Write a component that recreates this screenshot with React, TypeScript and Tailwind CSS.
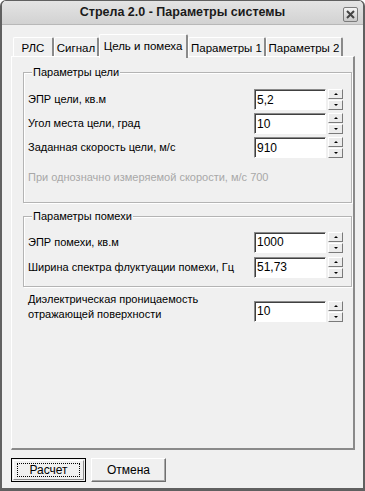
import React from 'react';

const font = { fontFamily: '"Liberation Sans", Arial, sans-serif' };

type Tab = { name: string; w: string; active?: boolean };

const tabs: Tab[] = [
    { name: 'РЛС', w: 'w-[41px]' },
    { name: 'Сигнал', w: 'w-[45px]' },
    { name: 'Цель и помеха', w: 'w-[89px]', active: true },
    { name: 'Параметры 1', w: 'w-[78px]' },
    { name: 'Параметры 2', w: 'w-[77px]' },
];

function Spinner() {
    return (
        <div className="ml-[2px] flex flex-col gap-[1px]">
            <div className="flex h-[10px] w-[15px] items-center justify-center border border-t-white border-l-white border-r-[#7a7a7a] border-b-[#7a7a7a] bg-[#ececec]">
                <div className="h-0 w-0 border-x-[2px] border-b-[2px] border-x-transparent border-b-black" />
            </div>
            <div className="flex h-[10px] w-[15px] items-center justify-center border border-t-white border-l-white border-r-[#7a7a7a] border-b-[#7a7a7a] bg-[#ececec]">
                <div className="h-0 w-0 border-x-[2px] border-t-[2px] border-x-transparent border-t-black" />
            </div>
        </div>
    );
}

function NumField({ value }: { value: string }) {
    return (
        <div className="flex items-center">
            <div className="flex h-[21px] w-[72px] items-center border border-t-[#8a8a8a] border-l-[#8a8a8a] border-r-white border-b-white bg-white pl-[2px] text-[12px] text-black shadow-[inset_1px_1px_0_#404040]">
                {value}
            </div>
            <Spinner />
        </div>
    );
}

function Row({ label, value }: { label: string; value: string }) {
    return (
        <div className="flex h-[21px] items-center justify-between">
            <span>{label}</span>
            <NumField value={value} />
        </div>
    );
}

function Group({ title, children }: { title: string; children: React.ReactNode }) {
    return (
        <div className="flex flex-col border border-[#b4b4b4] shadow-[inset_1px_1px_0_#fff,1px_1px_0_#fff] pl-[4px] pr-[8px]">
            <span className="-mt-[7px] ml-[4px] self-start bg-[#f0f0f0] px-[1px] leading-[13px]">{title}</span>
            {children}
        </div>
    );
}

export default function App() {
    return (
        <div
            className="flex h-[491px] w-[365px] flex-col overflow-hidden rounded-t-[6px] border-x-[2px] border-b-[3px] border-t border-[#606060] bg-[#f0f0f0] text-[11px] text-black"
            style={font}
        >
            {/* Title bar */}
            <div className="relative flex h-[24px] shrink-0 items-center justify-center bg-gradient-to-b from-[#e4e4e4] to-[#d2d2d2] border-b border-[#b8b8b8]">
                <span className="text-[12.5px] font-bold text-[#1a1a1a]">Стрела 2.0 - Параметры системы</span>
                <div className="absolute right-[5px] top-[6px] flex h-[15px] w-[15px] items-center justify-center rounded-[2px] border border-[#7c7c7c] bg-gradient-to-b from-[#f4f4f4] to-[#c8c8c8]">
                    <svg width="9" height="9" viewBox="0 0 9 9">
                        <path d="M1 1 L8 8 M8 1 L1 8" stroke="#444" strokeWidth="2" />
                    </svg>
                </div>
            </div>

            {/* Body */}
            <div className="flex flex-1 flex-col pl-[9px] pr-[8px] pt-[9px]">
                {/* Tabs */}
                <div className="flex items-end pl-[2px]">
                    {tabs.map((t) => (
                        <div
                            key={t.name}
                            className={`flex items-start justify-center rounded-t-[2px] border-l border-t border-l-white border-t-white border-r-2 border-r-[#8a8a8a] bg-[#f0f0f0] ${t.w} ${
                                t.active
                                    ? 'relative z-10 -mb-[2px] h-[24px] pt-[3px] text-[11.5px]'
                                    : 'h-[19px] pt-[2px] text-[11.5px]'
                            }`}
                        >
                            {t.name}
                        </div>
                    ))}
                </div>

                {/* Tab panel */}
                <div className="flex h-[394px] flex-col border-l border-t border-l-white border-t-white border-r-2 border-b-2 border-r-[#8a8a8a] border-b-[#8a8a8a] pl-[11px] pr-[1px] pt-[15px] text-[11px]">
                    <Group title="Параметры цели">
                        <div className="mt-[10px] flex flex-col gap-[3px]">
                            <Row label="ЭПР цели, кв.м" value="5,2" />
                            <Row label="Угол места цели, град" value="10" />
                            <Row label="Заданная скорость цели, м/с" value="910" />
                        </div>
                        <span className="mb-[16px] mt-[11px] text-[#a8a8a8]">При однозначно измеряемой скорости, м/с 700</span>
                    </Group>

                    <div className="mt-[13px]">
                        <Group title="Параметры помехи">
                            <div className="mb-[8px] mt-[9px] flex flex-col gap-[4px]">
                                <Row label="ЭПР помехи, кв.м" value="1000" />
                                <Row label="Ширина спектра флуктуации помехи, Гц" value="51,73" />
                            </div>
                        </Group>
                    </div>

                    <div className="mt-[5px] flex items-end justify-between pl-[5px] pr-[9px]">
                        <span className="leading-[15px]">
                            Диэлектрическая проницаемость
                            <br />
                            отражающей поверхности
                        </span>
                        <NumField value="10" />
                    </div>
                </div>

                {/* Buttons */}
                <div className="mt-[8px] flex gap-[5px]">
                    <div className="flex h-[24px] w-[75px] items-center justify-center border border-black p-[1px]">
                        <div className="flex h-full w-full items-center justify-center border border-t-white border-l-white border-r-[#8a8a8a] border-b-[#8a8a8a] px-[3px] py-[2px]">
                            <div className="flex h-full w-full items-center justify-center border border-dotted border-black text-[12px]">
                                Расчет
                            </div>
                        </div>
                    </div>
                    <div className="flex h-[24px] w-[75px] items-center justify-center border border-t-white border-l-white border-r-[#707070] border-b-[#707070] text-[12px] shadow-[inset_-1px_-1px_0_#a8a8a8]">
                        Отмена
                    </div>
                </div>
            </div>
        </div>
    );
}
